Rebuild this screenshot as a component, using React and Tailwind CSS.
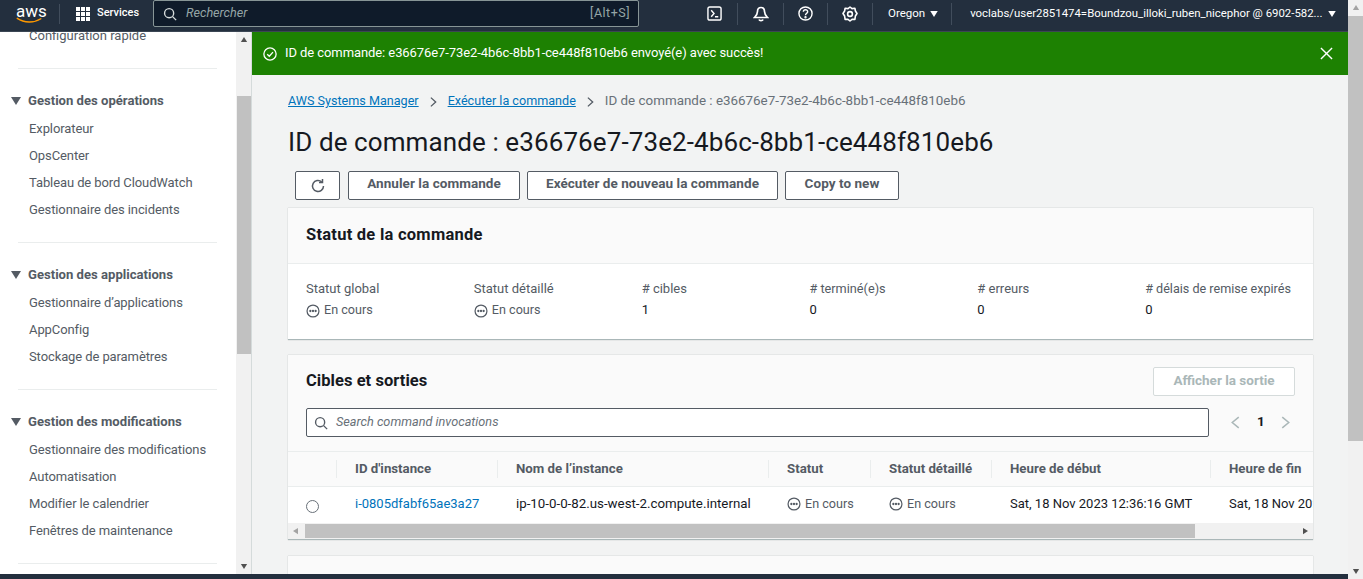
import React from "react";

const font = { fontFamily: 'Roboto, "Noto Sans", sans-serif' };

function Tri({ dir = "down", className = "" }) {
  const pts = { down: "0,0 10,0 5,8", up: "0,8 10,8 5,0", left: "8,0 8,10 0,5", right: "0,0 0,10 8,5" }[dir];
  const vb = dir === "down" || dir === "up" ? "0 0 10 8" : "0 0 8 10";
  return (
    <svg viewBox={vb} className={"shrink-0 " + className} fill="currentColor">
      <polygon points={pts} />
    </svg>
  );
}

function Dots() {
  return (
    <svg viewBox="0 0 16 16" className="w-[14px] h-[14px] shrink-0 text-[#545b64] mt-[1px]" fill="none" stroke="currentColor" strokeWidth="1.4">
      <circle cx="8" cy="8" r="6.8" />
      <circle cx="5" cy="8" r="0.6" fill="currentColor" />
      <circle cx="8" cy="8" r="0.6" fill="currentColor" />
      <circle cx="11" cy="8" r="0.6" fill="currentColor" />
    </svg>
  );
}

function Status() {
  return (
    <span className="flex items-center gap-1 text-[#545b64] text-[12.6px] leading-[18px]">
      <Dots />
      En cours
    </span>
  );
}

function NavSep() {
  return <div className="w-px h-[22px] bg-[#414d5c] shrink-0" />;
}

function Section({ title, items }) {
  return (
    <div>
      <div className="flex items-center h-[20px] pl-[11px] gap-[7px]">
        <Tri className="w-[10px] h-[8px] text-[#545b64]" />
        <span className="text-[13.1px] font-bold text-[#545b64]">{title}</span>
      </div>
      <ul className="mt-[4px] pl-[29px]">
        {items.map((i) => (
          <li key={i} className="h-[27px] flex items-center text-[13px] text-[#545b64] tracking-[-0.1px] whitespace-nowrap">
            {i}
          </li>
        ))}
      </ul>
    </div>
  );
}

function Hr({ className = "" }) {
  return <div className={"ml-[18px] w-[199px] h-px bg-[#eaeded] " + className} />;
}

function Btn({ children, className = "" }) {
  return (
    <button className={"h-[29px] border border-[#545b64] rounded-[2px] bg-white text-[13.5px] font-bold text-[#545b64] tracking-[0.05px] flex items-center justify-center whitespace-nowrap pb-[4px] " + className}>
      {children}
    </button>
  );
}

function Metric({ label, size = "text-[13px]", children }) {
  return (
    <div>
      <div className={"leading-[18px] text-[#545b64] whitespace-nowrap " + size}>{label}</div>
      <div className="mt-[3px] text-[13px] leading-[18px] text-[#16191f]">{children}</div>
    </div>
  );
}

const cols = "grid grid-cols-[48px_161px_271px_102px_121px_219px_103px]";

function Th({ children }) {
  return (
    <div className="h-full flex items-center">
      <div className="w-px h-[18px] bg-[#eaeded]" />
      <span className="text-[13.25px] font-bold text-[#545b64] whitespace-nowrap pl-[18px]">{children}</span>
    </div>
  );
}

function Td({ children, color = "text-[#16191f]", size = "text-[13px]" }) {
  return <div className={"h-full flex items-center pl-[19px] pb-[3px] whitespace-nowrap overflow-hidden " + size + " " + color}>{children}</div>;
}

export default function App() {
  return (
    <div style={font} className="w-[1363px] h-[579px] flex overflow-hidden bg-[#f2f3f3]">
      <div className="w-[1348px] h-full flex flex-col">
        {/* top nav */}
        <header className="h-[32px] shrink-0 bg-[#232f3e] flex items-center text-white border-b border-[#3b4654] pb-[4px]">
          <div className="relative w-[44px] ml-[15px] h-[24px] shrink-0">
            <span className="absolute left-[1px] -top-[1px] text-[17px] leading-[20px] text-white">aws</span>
            <svg viewBox="0 0 30 8" className="absolute left-0 top-[15px] w-[29px] h-[7px]" fill="none">
              <path d="M1 1.5C9 7 20 7 28 2" stroke="#ff9900" strokeWidth="1.6" strokeLinecap="round" />
            </svg>
          </div>
          <div className="w-px h-[20px] bg-[#414d5c] shrink-0" />
          <div className="ml-[16px] grid grid-cols-3 gap-[1px] w-[14px] h-[14px] shrink-0">
            {Array.from({ length: 9 }).map((_, i) => (
              <span key={i} className="bg-white w-[4px] h-[4px]" />
            ))}
          </div>
          <span className="ml-[7px] w-[41px] text-[11px] font-medium whitespace-nowrap">Services</span>
          <div className="ml-[15px] w-[486px] h-[27px] shrink-0 bg-[#0f1b2a] border border-[#879596] rounded-[2px] flex items-center pl-[9px] pr-[8px]">
            <svg viewBox="0 0 16 16" className="w-[14px] h-[14px] text-[#d5dbdb] shrink-0" fill="none" stroke="currentColor" strokeWidth="1.6">
              <circle cx="7" cy="7" r="5.2" />
              <path d="M11 11l4 4" />
            </svg>
            <span className="ml-[9px] text-[12.6px] italic text-[#95a5a6]">Rechercher</span>
            <span className="ml-auto text-[12.5px] tracking-[0.5px] text-[#95a5a6]">[Alt+S]</span>
          </div>
          <svg viewBox="0 0 16 16" className="ml-[68px] w-[15px] h-[15px] shrink-0" fill="none" stroke="white" strokeWidth="1.5">
            <rect x="1" y="1" width="14" height="14" rx="2" />
            <path d="M4.5 4.5L7.5 8L4.5 11.5M8.5 11.5H12" />
          </svg>
          <div className="ml-[15px]"><NavSep /></div>
          <svg viewBox="0 0 16 16" className="ml-[15px] w-[16px] h-[16px] shrink-0" fill="none" stroke="white" strokeWidth="1.7">
            <path d="M8 1.5C5.5 1.5 4.5 3.5 4.5 5.5C4.5 8.5 3 10 1.5 11.5H14.5C13 10 11.5 8.5 11.5 5.5C11.5 3.5 10.5 1.5 8 1.5Z" />
            <path d="M6 13.5C6.5 15 9.5 15 10 13.5" />
          </svg>
          <div className="ml-[14px]"><NavSep /></div>
          <svg viewBox="0 0 16 16" className="ml-[14px] w-[15px] h-[15px] shrink-0" fill="none" stroke="white" strokeWidth="1.5">
            <circle cx="8" cy="8" r="7" />
            <path d="M5.7 6.2C5.8 3.4 10.3 3.4 10.3 6C10.3 7.8 8 7.8 8 9.8" />
            <circle cx="8" cy="12" r="0.5" fill="white" />
          </svg>
          <div className="ml-[14px]"><NavSep /></div>
          <svg viewBox="0 0 16 16" className="ml-[14px] w-[16px] h-[16px] shrink-0" fill="none" stroke="white" strokeWidth="1.6">
            <path d="M8 1L10 2.6L12.9 2.3L13.4 5L15 7.5L13.4 10L12.9 13.4L10 13.4L8 15L6 13.4L3.1 13.4L2.6 10L1 7.5L2.6 5L3.1 2.3L6 2.6Z" strokeLinejoin="round" />
            <circle cx="8" cy="8" r="2.4" />
          </svg>
          <div className="ml-[14px]"><NavSep /></div>
          <span className="ml-[15px] text-[11.5px]">Oregon</span>
          <Tri className="ml-[5px] w-[8px] h-[6px] text-white" />
          <div className="ml-[13px]"><NavSep /></div>
          <span className="ml-[18px] text-[11.4px] whitespace-nowrap">voclabs/user2851474=Boundzou_illoki_ruben_nicephor @ 6902-582...</span>
          <Tri className="ml-[5px] w-[8px] h-[6px] text-white" />
        </header>

        <div className="flex-1 flex min-h-0">
          {/* side nav */}
          <aside className="w-[236px] shrink-0 bg-white overflow-hidden">
            <div className="-mt-[10px]">
              <div className="pl-[29px] h-[27px] flex items-center text-[13px] text-[#545b64]">Configuration rapide</div>
              <Hr className="mt-[19px]" />
              <div className="mt-[22px]">
                <Section title="Gestion des opérations" items={["Explorateur", "OpsCenter", "Tableau de bord CloudWatch", "Gestionnaire des incidents"]} />
              </div>
              <Hr className="mt-[19px]" />
              <div className="mt-[22px]">
                <Section title="Gestion des applications" items={["Gestionnaire d’applications", "AppConfig", "Stockage de paramètres"]} />
              </div>
              <Hr className="mt-[19px]" />
              <div className="mt-[22px]">
                <Section title="Gestion des modifications" items={["Gestionnaire des modifications", "Automatisation", "Modifier le calendrier", "Fenêtres de maintenance"]} />
              </div>
              <Hr className="mt-[19px]" />
            </div>
          </aside>
          {/* side nav scrollbar */}
          <div className="w-[16px] shrink-0 bg-[#f1f1f1] flex flex-col items-center border-r border-[#d5dbdb]">
            <Tri dir="up" className="mt-[5px] w-[8px] h-[5px] text-[#505050]" />
            <div className="mt-[54px] w-[14px] h-[258px] bg-[#c1c1c1]" />
            <div className="flex-1" />
            <Tri className="mb-[5px] w-[8px] h-[5px] text-[#505050]" />
          </div>

          {/* main */}
          <main className="flex-1 min-w-0 overflow-hidden">
            <div className="h-[43px] bg-[#1d8102] flex items-center pl-[11px] pr-[15px] text-white">
              <svg viewBox="0 0 16 16" className="w-[14px] h-[14px] shrink-0" fill="none" stroke="white" strokeWidth="1.5">
                <circle cx="8" cy="8" r="7" />
                <path d="M4.8 8.2L7.2 10.6L11.4 5.8" />
              </svg>
              <span className="ml-[8px] text-[13px] tracking-[-0.08px] pb-[1px]">ID de commande: e36676e7-73e2-4b6c-8bb1-ce448f810eb6 envoyé(e) avec succès!</span>
              <svg viewBox="0 0 14 14" className="ml-auto w-[13px] h-[13px] shrink-0" fill="none" stroke="white" strokeWidth="1.5">
                <path d="M1 1L13 13M13 1L1 13" />
              </svg>
            </div>
            <div className="pl-[36px] w-[1061px]">
              <nav className="mt-[18px] h-[17px] flex items-center text-[12.6px] whitespace-nowrap">
                <a className="text-[#0073bb] underline">AWS Systems Manager</a>
                <svg viewBox="0 0 8 12" className="ml-[11px] w-[7px] h-[12px] shrink-0" fill="none" stroke="#545b64" strokeWidth="1.5"><path d="M1 1l5.5 5L1 11" /></svg>
                <a className="ml-[11px] text-[#0073bb] underline">Exécuter la commande</a>
                <svg viewBox="0 0 8 12" className="ml-[11px] w-[7px] h-[12px] shrink-0" fill="none" stroke="#545b64" strokeWidth="1.5"><path d="M1 1l5.5 5L1 11" /></svg>
                <span className="ml-[11px] text-[13.4px] text-[#687078]">ID de commande : e36676e7-73e2-4b6c-8bb1-ce448f810eb6</span>
              </nav>
              <h1 className="mt-[16px] h-[32px] flex items-center text-[26px] tracking-[0.1px] font-normal text-[#16191f] whitespace-nowrap">
                ID de commande : e36676e7-73e2-4b6c-8bb1-ce448f810eb6
              </h1>
              <div className="mt-[13px] pl-[7px] flex gap-[7px]">
                <Btn className="w-[45px] mr-[1px]">
                  <svg viewBox="0 0 16 16" className="w-[16px] h-[16px] mt-[4px]" fill="none" stroke="#545b64" strokeWidth="1.5">
                    <path d="M13.5 8a5.5 5.5 0 1 1-1.8-4.1" />
                    <path d="M12.5 1v3.4H9" />
                  </svg>
                </Btn>
                <Btn className="w-[172px]">Annuler la commande</Btn>
                <Btn className="w-[251px]">Exécuter de nouveau la commande</Btn>
                <Btn className="w-[114px]">Copy to new</Btn>
              </div>

              <section className="mt-[8px] bg-white border-b border-[#aab7b8] shadow-[0_0_1px_rgba(0,28,36,0.3)]">
                <div className="h-[56px] bg-[#fafafa] border-b border-[#eaeded] flex items-center px-[18px]">
                  <h2 className="text-[16.5px] tracking-[0.25px] font-bold text-[#16191f]">Statut de la commande</h2>
                </div>
                <div className="h-[75px] pt-[16px] pl-[18px] grid grid-cols-6">
                  <Metric label="Statut global"><Status /></Metric>
                  <Metric label="Statut détaillé"><Status /></Metric>
                  <Metric label="# cibles">1</Metric>
                  <Metric label="# terminé(e)s" size="text-[12.7px]">0</Metric>
                  <Metric label="# erreurs">0</Metric>
                  <Metric label="# délais de remise expirés" size="text-[12.6px]">0</Metric>
                </div>
              </section>

              <section className="mt-[15px] bg-white border-b border-[#aab7b8] shadow-[0_0_1px_rgba(0,28,36,0.3)]">
                <div className="h-[97px] bg-[#fafafa] border-b border-[#eaeded] px-[18px]">
                  <div className="h-[53px] flex items-center justify-between">
                    <h2 className="text-[16.5px] tracking-[0.05px] font-bold text-[#16191f]">Cibles et sorties</h2>
                    <div className="w-[142px] h-[29px] border border-[#d5dbdb] rounded-[2px] bg-white flex items-center justify-center text-[13.5px] font-bold text-[#aab7b8] pb-[2px]">
                      Afficher la sortie
                    </div>
                  </div>
                  <div className="flex items-center">
                    <div className="w-[903px] h-[29px] bg-white border border-[#545b64] rounded-[2px] flex items-center pl-[7px]">
                      <svg viewBox="0 0 16 16" className="w-[14px] h-[14px] shrink-0" fill="none" stroke="#545b64" strokeWidth="1.6">
                        <circle cx="7" cy="7" r="5.2" />
                        <path d="M11 11l4 4" />
                      </svg>
                      <span className="ml-[8px] text-[12.7px] italic text-[#687078] pb-[2px]">Search command invocations</span>
                    </div>
                    <svg viewBox="0 0 8 12" className="ml-[22px] w-[9px] h-[13px] rotate-180 shrink-0" fill="none" stroke="#aab7b8" strokeWidth="1.4"><path d="M1 1l6 5-6 5" /></svg>
                    <span className="ml-[17px] text-[13.5px] font-bold text-[#16191f] pb-[2px]">1</span>
                    <svg viewBox="0 0 8 12" className="ml-[16px] w-[9px] h-[13px] shrink-0" fill="none" stroke="#aab7b8" strokeWidth="1.4"><path d="M1 1l6 5-6 5" /></svg>
                  </div>
                </div>
                <div className="overflow-hidden">
                  <div className={cols + " h-[35px] bg-[#fafafa] border-b border-[#eaeded]"}>
                    <div />
                    <Th>ID d'instance</Th>
                    <Th>Nom de l’instance</Th>
                    <Th>Statut</Th>
                    <Th>Statut détaillé</Th>
                    <Th>Heure de début</Th>
                    <Th>Heure de fin</Th>
                  </div>
                  <div className={cols + " h-[36px] bg-white"}>
                    <div className="h-full flex items-center pl-[18px]">
                      <span className="w-[13px] h-[13px] rounded-full border border-[#687078] bg-white mt-[2px]" />
                    </div>
                    <Td color="text-[#0073bb]">i-0805dfabf65ae3a27</Td>
                    <Td size="text-[13.3px]">ip-10-0-0-82.us-west-2.compute.internal</Td>
                    <Td><Status /></Td>
                    <Td><Status /></Td>
                    <Td>Sat, 18 Nov 2023 12:36:16 GMT</Td>
                    <Td>Sat, 18 Nov 2023 12:36:16 GMT</Td>
                  </div>
                </div>
                <div className="h-[16px] bg-[#f1f1f1] flex items-center">
                  <Tri dir="left" className="ml-[5px] w-[5px] h-[8px] text-[#a3a3a3]" />
                  <div className="ml-[7px] w-[890px] h-[14px] bg-[#c1c1c1]" />
                  <div className="flex-1" />
                  <Tri dir="right" className="mr-[5px] w-[5px] h-[8px] text-[#505050]" />
                </div>
              </section>

              <section className="mt-[16px] h-[40px] bg-[#fafafa] shadow-[0_0_1px_rgba(0,28,36,0.3)]" />
            </div>
          </main>
        </div>
        <div className="h-[5px] shrink-0 bg-[#232f3e]" />
      </div>
      {/* page scrollbar */}
      <div className="w-[15px] h-full shrink-0 bg-[#f1f1f1] flex flex-col items-center">
        <Tri dir="up" className="mt-[5px] w-[8px] h-[5px] text-[#a3a3a3]" />
        <div className="mt-[6px] w-[15px] h-[425px] bg-[#c1c1c1]" />
        <div className="flex-1" />
        <Tri className="mb-[5px] w-[8px] h-[5px] text-[#505050]" />
      </div>
    </div>
  );
}
